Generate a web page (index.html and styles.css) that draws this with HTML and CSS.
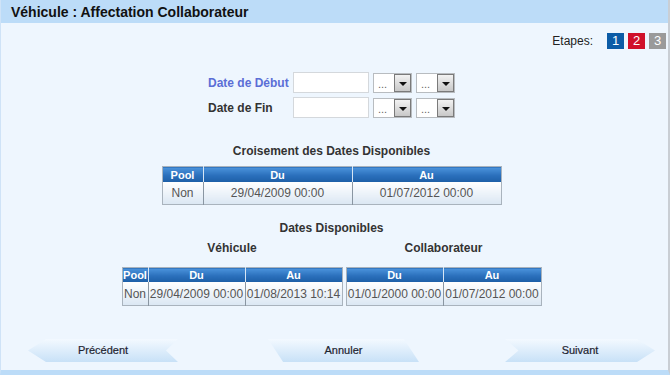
FILE: index.html
```html
<!DOCTYPE html>
<html lang="fr">
<head>
    <meta charset="UTF-8">
    <title>Véhicule : Affectation Collaborateur</title>
    <link rel="stylesheet" href="styles.css">
</head>
<body>
    <div class="window">
        <div class="titlebar">Véhicule : Affectation Collaborateur</div>

        <div class="content">
            <!-- Steps -->
            <div class="steps">
                <span class="steps-label">Etapes:</span>
                <span class="step step-done">1</span>
                <span class="step step-current">2</span>
                <span class="step step-todo">3</span>
            </div>

            <!-- Date range -->
            <div class="dates">
                <label class="date-label active">Date de Début</label>
                <span class="date-input"></span>
                <span class="combo"><span class="combo-text">...</span><span class="combo-btn"></span></span>
                <span class="combo"><span class="combo-text">...</span><span class="combo-btn"></span></span>

                <label class="date-label">Date de Fin</label>
                <span class="date-input"></span>
                <span class="combo"><span class="combo-text">...</span><span class="combo-btn"></span></span>
                <span class="combo"><span class="combo-text">...</span><span class="combo-btn"></span></span>
            </div>

            <!-- Crossing -->
            <h2 class="section-title first">Croisement des Dates Disponibles</h2>
            <table class="grid grid-main">
                <tr><th class="c-pool">Pool</th><th class="c-date">Du</th><th class="c-date">Au</th></tr>
                <tr><td>Non</td><td>29/04/2009 00:00</td><td>01/07/2012 00:00</td></tr>
            </table>

            <!-- Available dates -->
            <h2 class="section-title">Dates Disponibles</h2>
            <div class="pair">
                <div class="pair-col">
                    <h3 class="sub-title">Véhicule</h3>
                    <table class="grid grid-small">
                        <tr><th class="c-pool-s">Pool</th><th class="c-date-s">Du</th><th class="c-date-s">Au</th></tr>
                        <tr><td>Non</td><td>29/04/2009 00:00</td><td>01/08/2013 10:14</td></tr>
                    </table>
                </div>
                <div class="pair-col">
                    <h3 class="sub-title">Collaborateur</h3>
                    <table class="grid grid-small">
                        <tr><th class="c-date-s">Du</th><th class="c-date-s2">Au</th></tr>
                        <tr><td>01/01/2000 00:00</td><td>01/07/2012 00:00</td></tr>
                    </table>
                </div>
            </div>

            <!-- Navigation -->
            <div class="nav">
                <span class="nav-btn btn-prev">Précédent</span>
                <span class="nav-btn btn-cancel">Annuler</span>
                <span class="nav-btn btn-next">Suivant</span>
            </div>
        </div>
    </div>
</body>
</html>
```

FILE: styles.css
```css
body {
    margin: 0;
    font-family: "Liberation Sans", Arial, sans-serif;
    background-color: #eef6fe;
}
.window {
    width: 670px;
    height: 375px;
    box-sizing: border-box;
    background-color: #eef6fe;
    border-right: 2px solid #c9ced4;
    border-left: 1px solid #cfe3f7;
    border-bottom: 5px solid #bcdcf8;
    display: flex;
    flex-direction: column;
}
.titlebar {
    height: 23px;
    line-height: 24px;
    background-color: #bcdcf8;
    color: #111;
    font-weight: bold;
    font-size: 14px;
    padding-left: 10px;
}
.content {
    flex: 1;
    display: flex;
    flex-direction: column;
    align-items: center;
    padding-right: 6px;
}

/* Steps */
.steps {
    align-self: flex-end;
    display: flex;
    align-items: center;
    margin-top: 10px;
    margin-right: -4px;
    height: 16px;
}
.steps-label {
    font-size: 12px;
    color: #222;
    margin-right: 10px;
}
.step {
    width: 17px;
    height: 16px;
    line-height: 16px;
    text-align: center;
    color: #fff;
    font-size: 13px;
    margin-left: 4px;
}
.step-done { background-color: #0c5ca6; }
.step-current { background-color: #d0112b; }
.step-todo { background-color: #9a9a9a; }

/* Date range */
.dates {
    display: grid;
    grid-template-columns: 81px 76px 39px 39px;
    column-gap: 4px;
    row-gap: 4px;
    align-items: center;
    margin-top: 23px;
}
.date-label {
    font-size: 12px;
    font-weight: bold;
    color: #333;
    white-space: nowrap;
}
.date-label.active { color: #5b6ed6; }
.date-input {
    height: 21px;
    box-sizing: border-box;
    background: #fff;
    border: 1px solid #d4d8dc;
}
.combo {
    height: 20px;
    box-sizing: border-box;
    background: #fff;
    border: 1px solid #b8bcc0;
    display: flex;
    align-items: stretch;
}
.combo-text {
    flex: 1;
    font-size: 11px;
    color: #666;
    padding-left: 4px;
    line-height: 21px;
}
.combo-btn {
    width: 15px;
    border: 1px solid #7a7a7a;
    background: linear-gradient(#f2f2f2, #c8c8c8);
    position: relative;
}
.combo-btn::after {
    content: "";
    position: absolute;
    left: 4px;
    top: 7px;
    border-left: 4px solid transparent;
    border-right: 4px solid transparent;
    border-top: 4px solid #111;
}

/* Section titles */
.section-title {
    font-size: 12px;
    font-weight: bold;
    color: #333;
    margin: 15px 0 0;
    height: 16px;
    line-height: 16px;
}
.section-title.first { margin-top: 25px; }
.sub-title {
    font-size: 12px;
    font-weight: bold;
    color: #333;
    margin: 4px 0 11px;
    height: 16px;
    line-height: 16px;
    text-align: center;
}

/* Tables */
.grid {
    border-collapse: collapse;
    border: 1px solid #a9b3bd;
    font-size: 12px;
}
.grid-main { margin-top: 7px; }
.grid th {
    height: 15px;
    padding: 0;
    color: #fff;
    font-size: 11px;
    font-weight: bold;
    background: linear-gradient(#4b93dc, #2a6fbb 55%, #1d5ea6);
    border-left: 1px solid #d7e6f5;
}
.grid th:first-child { border-left: none; }
.grid td {
    height: 22px;
    padding: 0;
    text-align: center;
    color: #555;
    background: linear-gradient(#ffffff, #dbe7f3);
    border-left: 1px solid #8a96a2;
}
.grid td:first-child { border-left: none; }
.grid-small th { height: 14px; }
.grid-small td { height: 23px; }
.c-pool { width: 40px; }
.c-date { width: 148px; }
.c-pool-s { width: 25px; }
.c-date-s { width: 96px; }
.c-date-s2 { width: 97px; }

.pair {
    display: flex;
    gap: 3px;
    align-items: flex-start;
}
.pair-col {
    display: flex;
    flex-direction: column;
    align-items: center;
}

/* Navigation */
.nav {
    align-self: stretch;
    position: relative;
    margin-top: 33px;
    height: 23px;
}
.nav-btn {
    position: absolute;
    top: 0;
    height: 23px;
    line-height: 22px;
    text-align: center;
    font-size: 11px;
    color: #1e2430;
    -webkit-text-stroke: 0.2px #1e2430;
    background: linear-gradient(#f3f9ff, #c8e1f7);
}
.btn-prev {
    left: 27px;
    width: 150px;
    clip-path: polygon(0 50%, 12% 0, 100% 0, 92% 50%, 100% 100%, 12% 100%);
}
.btn-cancel {
    left: 267px;
    width: 151px;
    clip-path: polygon(0 0, 90% 0, 100% 100%, 10% 100%);
}
.btn-next {
    left: 504px;
    width: 150px;
    clip-path: polygon(0 0, 88% 0, 100% 50%, 88% 100%, 0 100%, 9% 50%);
}
```
